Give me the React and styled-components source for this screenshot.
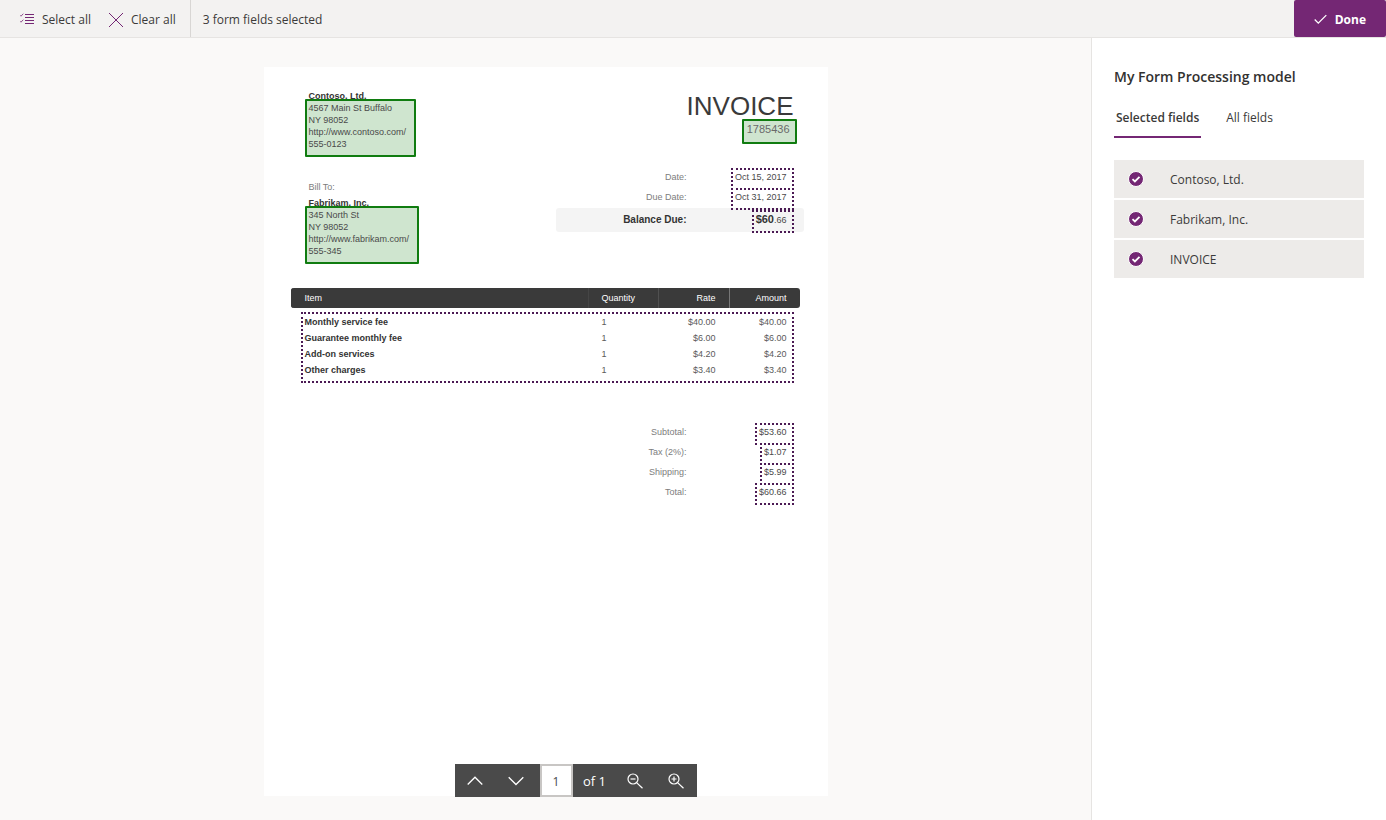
import React, { useState } from "react";
import styled, { createGlobalStyle, css } from "styled-components";

const GlobalStyle = createGlobalStyle`
  *, *::before, *::after { box-sizing: border-box; }
  body {
    margin: 0;
    background: #faf9f8;
    color: #3b3a39;
    font-family: "Open Sans", "Noto Sans", sans-serif;
    font-size: 12px;
    line-height: 16px;
  }
  button, input { font: inherit; color: inherit; }
  h1, h2, p { margin: 0; }
`;

const Shell = styled.div`
  display: flex;
  flex-direction: column;
  min-height: 100vh;
`;

/* ---------- Command bar ---------- */

const CommandBar = styled.header`
  display: flex;
  align-items: stretch;
  height: 38px;
  background: #f3f2f1;
  border-bottom: 1px solid #e6e4e2;
`;

const Commands = styled.div`
  display: flex;
  align-items: center;
  gap: 18px;
  padding: 2px 14px 0 20px;
  border-right: 1px solid #d8d6d4;
`;

const CommandButton = styled.button`
  display: flex;
  align-items: center;
  gap: 8px;
  padding: 0;
  border: 0;
  background: none;
  cursor: pointer;
`;

const Status = styled.p`
  flex: 1;
  padding: 2px 0 0 12px;
  align-self: center;
`;

const DoneButton = styled.button`
  display: flex;
  align-items: center;
  gap: 8px;
  height: 37px;
  padding: 2px 20px 0;
  border: 0;
  border-radius: 2px;
  background: #742774;
  color: #fff;
  font-weight: 700;
  cursor: pointer;
`;

/* ---------- Work area ---------- */

const Workspace = styled.div`
  display: flex;
  flex: 1;
`;

const Viewer = styled.main`
  position: relative;
  flex: 1;
  display: flex;
  justify-content: center;
  align-items: flex-start;
  padding: 29px 24px 24px;
`;

const Sheet = styled.article`
  flex: 0 1 564px;
  min-height: 729px;
  padding-top: 23px;
  background: #fff;
  color: #5a5a5a;
  font-family: "Liberation Sans", Arial, sans-serif;
  font-size: 9px;
  line-height: 12px;
`;

const SheetHead = styled.div`
  display: flex;
  justify-content: space-between;
  padding: 0 24px 0 41px;
`;

const Parties = styled.div`
  display: flex;
  flex-direction: column;
  align-items: flex-start;
`;

const PartyName = styled.strong`
  padding-left: 4px;
  color: #333;
`;

const BillTo = styled.p`
  margin: 24px 0 4px;
  padding-left: 4px;
  color: #7d7d7d;
`;

const pickedField = css`
  position: relative;
  border: 2px solid #107c10;
  border-radius: 1px;
  background: rgba(16, 124, 16, 0.2);
`;

const Address = styled.address`
  ${pickedField}
  margin-top: -3px;
  padding: 1px 8px 5px 2px;
  color: #4a4a4a;
  font-style: normal;
  white-space: pre-line;
`;

const Summary = styled.div`
  display: flex;
  flex-direction: column;
  width: 248px;
`;

const InvoiceTitle = styled.h1`
  padding: 1px 10px 0 0;
  color: #3a3a3a;
  font-size: 26px;
  font-weight: 400;
  line-height: 30px;
  text-align: right;
`;

const InvoiceNumber = styled.span`
  ${pickedField}
  align-self: flex-end;
  height: 25px;
  margin: -2px 7px 24px 0;
  padding: 1px 5px 0 3px;
  color: #6a6a6a;
  font-size: 11px;
  line-height: 14px;
`;

const SummaryRow = styled.div`
  display: grid;
  grid-template-columns: 1fr 107px;
  align-items: start;
  padding-right: 10px;
  & + & { margin-top: -2px; }
  ${(p) =>
    p.$balance &&
    css`
      height: 24px;
      padding-top: 2px;
      border-radius: 3px;
      background: #f4f4f4;
    `}
`;

const SummaryLabel = styled.span`
  padding-top: 3px;
  text-align: right;
  color: #7d7d7d;
  ${(p) =>
    p.$strong &&
    css`
      padding-top: 4px;
      color: #333;
      font-size: 10px;
      font-weight: 700;
    `}
`;

const DetectedField = styled.span`
  position: relative;
  z-index: 1;
  justify-self: end;
  padding: 1px 5px 5px 2px;
  border: 2px dotted #4b1a54;
  color: #4a4a4a;
  white-space: nowrap;
  strong {
    color: #333;
    font-size: 11px;
  }
`;

const ItemsFrame = styled.div`
  position: relative;
  margin: 24px 28px 40px 27px;
  padding-bottom: 5px;
`;

const ItemsOutline = styled.div`
  position: absolute;
  inset: 24px 6px 0 10px;
  border: 2px dotted #4b1a54;
  pointer-events: none;
`;

const ItemsTable = styled.table`
  width: 100%;
  table-layout: fixed;
  border-collapse: separate;
  border-spacing: 0;
  td, th { padding: 0 13px 0 14px; }
`;

const HeadCell = styled.th`
  width: ${(p) => p.$width || "auto"};
  height: 20px;
  background: #3a3a3a;
  color: #fff;
  font-weight: 400;
  text-align: ${(p) => p.$align || "left"};
  box-shadow: inset 1px 0 ${(p) => p.$rule || "#3a3a3a"};
  &:first-child { border-radius: 3px 0 0 3px; }
  &:last-child { border-radius: 0 3px 3px 0; }
`;

const ItemsBody = styled.tbody`
  &::before {
    content: "";
    display: table-row;
    height: 6px;
  }
`;

const Cell = styled.td`
  height: 16px;
  text-align: ${(p) => p.$align || "left"};
`;

const ItemName = styled.th`
  height: 16px;
  color: #333;
  text-align: left;
`;

const Totals = styled.div`
  display: flex;
  flex-direction: column;
  width: 248px;
  margin: 0 24px 0 auto;
`;

/* ---------- Pager ---------- */

const Pager = styled.nav`
  position: absolute;
  bottom: 23px;
  left: calc(50% + 30px);
  transform: translateX(-50%);
  display: flex;
  height: 33px;
  background: #4a4a4a;
  color: #fff;
`;

const PagerButton = styled.button`
  display: grid;
  place-items: center;
  width: 41px;
  padding: 0;
  border: 0;
  background: none;
  color: #fff;
  cursor: pointer;
`;

const PageInput = styled.input`
  width: 33px;
  margin-left: 3px;
  padding: 2px 0 0;
  border: 2px solid #c8c6c4;
  border-radius: 0;
  background: #fff;
  color: #4a4a4a;
  text-align: center;
`;

const PageCount = styled.span`
  width: 40px;
  margin-left: 2px;
  align-self: center;
  text-align: center;
  font-size: 13px;
`;

/* ---------- Side panel ---------- */

const Panel = styled.aside`
  width: 295px;
  padding: 29px 22px;
  border-left: 1px solid #e6e4e2;
  background: #fff;
`;

const PanelTitle = styled.h2`
  font-size: 14px;
  font-weight: 600;
  line-height: 20px;
  color: #323130;
`;

const TabList = styled.div`
  display: flex;
  gap: 23px;
  margin: 21px 0 22px;
`;

const Tab = styled.button`
  height: 30px;
  padding: 0 2px 8px;
  border: 0;
  border-bottom: 2px solid ${(p) => (p.$active ? "#742774" : "transparent")};
  background: none;
  font-weight: ${(p) => (p.$active ? 600 : 400)};
  cursor: pointer;
`;

const FieldList = styled.ul`
  display: flex;
  flex-direction: column;
  gap: 2px;
  margin: 0;
  padding: 0;
  list-style: none;
`;

const FieldLabel = styled.label`
  display: flex;
  align-items: center;
  gap: 26px;
  height: 38px;
  padding-left: 14px;
  background: #edebe9;
  cursor: pointer;
`;

const CheckWrap = styled.span`
  display: grid;
  place-items: center;
  & > * { grid-area: 1 / 1; }
  svg { pointer-events: none; }
`;

const Check = styled.input`
  appearance: none;
  width: 16px;
  height: 16px;
  margin: 0;
  border: 1px solid #fff;
  border-radius: 50%;
  background: #fff;
  &:checked { background: #742774; }
`;

const FieldName = styled.span`
  padding-top: 2px;
`;

/* ---------- Icons ---------- */

const Icon = ({ size = 16, width = 1, children }) => (
  <svg
    width={size}
    height={size}
    viewBox={`0 0 ${size} ${size}`}
    fill="none"
    stroke="currentColor"
    strokeWidth={width}
    aria-hidden="true"
  >
    {children}
  </svg>
);

const Purple = styled.span`
  display: grid;
  color: #742774;
`;

const SelectAllIcon = () => (
  <Icon size={14}>
    <path d="M5 1.500h9.500M5 4.500h9.500M5 7.500h9.500M5 10.500h9.500" strokeWidth="1.200" />
    <path d="M0 2.200l1 1 2.300-2.500M0 8.200l1 1 2.300-2.500" strokeWidth=".8" />
  </Icon>
);
const ClearIcon = () => (
  <Icon size={14}>
    <path d="M0 0l14 14M14 0L0 14" />
  </Icon>
);
const DoneIcon = () => (
  <Icon size={13} width={1.3}>
    <path d="M.7 6.500l3.600 3.600 8-8" />
  </Icon>
);
const UpIcon = () => (
  <Icon width={1.3}>
    <path d="M.7 11.500L8 4.200l7.300 7.300" />
  </Icon>
);
const DownIcon = () => (
  <Icon width={1.3}>
    <path d="M.7 4.200L8 11.500l7.300-7.300" />
  </Icon>
);
const ZoomIcon = ({ plus }) => (
  <Icon width={1.2}>
    <circle cx="6" cy="6" r="5" />
    <path d="M9.600 9.600l5.900 5.700" />
    <path d={plus ? "M3.500 6h5M6 3.500v5" : "M3.500 6h5"} />
  </Icon>
);
const TickIcon = () => (
  <Icon size={16} width={1.8}>
    <path d="M4.500 8.200l2.400 2.300 4.600-4.700" stroke="#fff" />
  </Icon>
);

/* ---------- Data ---------- */

const items = [
  ["Monthly service fee", "1", "$40.00", "$40.00"],
  ["Guarantee monthly fee", "1", "$6.00", "$6.00"],
  ["Add-on services", "1", "$4.20", "$4.20"],
  ["Other charges", "1", "$3.40", "$3.40"],
];

const totals = [
  ["Subtotal:", "$53.60"],
  ["Tax (2%):", "$1.07"],
  ["Shipping:", "$5.99"],
  ["Total:", "$60.66"],
];

const fields = ["Contoso, Ltd.", "Fabrikam, Inc.", "INVOICE"];

function Invoice() {
  return (
    <Sheet>
      <SheetHead>
        <Parties>
          <PartyName>Contoso, Ltd.</PartyName>
          <Address>{"4567 Main St Buffalo\nNY 98052\nhttp://www.contoso.com/\n555-0123"}</Address>
          <BillTo>Bill To:</BillTo>
          <PartyName>Fabrikam, Inc.</PartyName>
          <Address>{"345 North St\nNY 98052\nhttp://www.fabrikam.com/\n555-345"}</Address>
        </Parties>
        <Summary>
          <InvoiceTitle>INVOICE</InvoiceTitle>
          <InvoiceNumber>1785436</InvoiceNumber>
          <SummaryRow>
            <SummaryLabel>Date:</SummaryLabel>
            <DetectedField>Oct 15, 2017</DetectedField>
          </SummaryRow>
          <SummaryRow>
            <SummaryLabel>Due Date:</SummaryLabel>
            <DetectedField>Oct 31, 2017</DetectedField>
          </SummaryRow>
          <SummaryRow $balance>
            <SummaryLabel $strong>Balance Due:</SummaryLabel>
            <DetectedField>
              <strong>$60</strong>.66
            </DetectedField>
          </SummaryRow>
        </Summary>
      </SheetHead>
      <ItemsFrame>
        <ItemsTable>
          <thead>
            <tr>
              <HeadCell>Item</HeadCell>
              <HeadCell $width="70px" $rule="#454545">Quantity</HeadCell>
              <HeadCell $width="71px" $rule="#505050" $align="right">Rate</HeadCell>
              <HeadCell $width="71px" $rule="#777" $align="right">Amount</HeadCell>
            </tr>
          </thead>
          <ItemsBody>
            {items.map(([name, quantity, rate, amount]) => (
              <tr key={name}>
                <ItemName scope="row">{name}</ItemName>
                <Cell>{quantity}</Cell>
                <Cell $align="right">{rate}</Cell>
                <Cell $align="right">{amount}</Cell>
              </tr>
            ))}
          </ItemsBody>
        </ItemsTable>
        <ItemsOutline />
      </ItemsFrame>
      <Totals>
        {totals.map(([label, value]) => (
          <SummaryRow key={label}>
            <SummaryLabel>{label}</SummaryLabel>
            <DetectedField>{value}</DetectedField>
          </SummaryRow>
        ))}
      </Totals>
    </Sheet>
  );
}

export default function App() {
  const [tab, setTab] = useState("Selected fields");
  return (
    <Shell>
      <GlobalStyle />
      <CommandBar>
        <Commands>
          <CommandButton type="button">
            <Purple><SelectAllIcon /></Purple>
            Select all
          </CommandButton>
          <CommandButton type="button">
            <Purple><ClearIcon /></Purple>
            Clear all
          </CommandButton>
        </Commands>
        <Status>3 form fields selected</Status>
        <DoneButton type="button">
          <DoneIcon />
          Done
        </DoneButton>
      </CommandBar>
      <Workspace>
        <Viewer>
          <Invoice />
          <Pager aria-label="Page navigation">
            <PagerButton type="button" aria-label="Previous page"><UpIcon /></PagerButton>
            <PagerButton type="button" aria-label="Next page"><DownIcon /></PagerButton>
            <PageInput aria-label="Page number" defaultValue="1" />
            <PageCount>of 1</PageCount>
            <PagerButton type="button" aria-label="Zoom out"><ZoomIcon /></PagerButton>
            <PagerButton type="button" aria-label="Zoom in"><ZoomIcon plus /></PagerButton>
          </Pager>
        </Viewer>
        <Panel>
          <PanelTitle>My Form Processing model</PanelTitle>
          <TabList role="tablist">
            {["Selected fields", "All fields"].map((name) => (
              <Tab
                key={name}
                type="button"
                role="tab"
                aria-selected={tab === name}
                $active={tab === name}
                onClick={() => setTab(name)}
              >
                {name}
              </Tab>
            ))}
          </TabList>
          <FieldList>
            {fields.map((name) => (
              <li key={name}>
                <FieldLabel>
                  <CheckWrap>
                    <Check type="checkbox" defaultChecked />
                    <TickIcon />
                  </CheckWrap>
                  <FieldName>{name}</FieldName>
                </FieldLabel>
              </li>
            ))}
          </FieldList>
        </Panel>
      </Workspace>
    </Shell>
  );
}
